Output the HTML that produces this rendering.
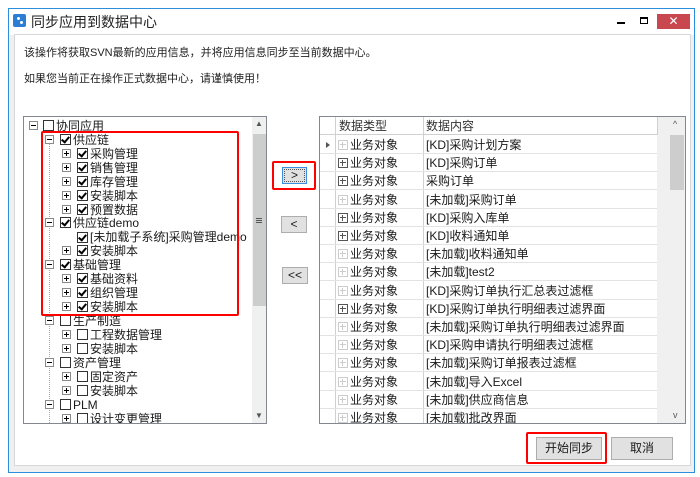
<!DOCTYPE html>
<html><head><meta charset="utf-8"><style>
*{margin:0;padding:0;box-sizing:border-box}
body{width:700px;height:477px;background:#fff;position:relative;overflow:hidden;font-family:"Liberation Sans","Noto Sans CJK SC",sans-serif;font-size:12px;color:#1a1a1a}
.a{position:absolute}
.win{left:8px;top:8px;width:687px;height:465px;border:1px solid #2b8fe0;background:#f0f0f0}
.title{left:9px;top:9px;width:685px;height:26px;background:#fff}
.panel{left:14px;top:34px;width:677px;height:432px;border:1px solid #d8d8d8;background:#fff}
.t{white-space:nowrap;line-height:14px}
.exp{width:9px;height:9px;border:1px solid #8a8a8a;background:#fff}
.exp:before{content:"";position:absolute;left:1px;top:3px;width:5px;height:1px;background:#000}
.exp.p:after{content:"";position:absolute;left:3px;top:1px;width:1px;height:5px;background:#000}
.cb{width:11px;height:11px;border:1px solid #333;background:#fff}
.cb.c:after{content:"";position:absolute;left:2px;top:0px;width:3px;height:6px;border:solid #000;border-width:0 2px 2px 0;transform:rotate(40deg)}
.btn{border:1px solid #adadad;background:#e1e1e1;text-align:center;font-size:12px}
.red{border:2px solid #f00;border-radius:2px}
.row{left:320px;width:337px;height:18px;border-bottom:1px solid #e3e3e3}
.rt{left:350px;line-height:18px}
.rc{left:426px;line-height:18px;white-space:nowrap}
.rb{left:338px;width:10px;height:10px;border:1px solid #555}
.rb:before{content:"";position:absolute;left:1px;top:3px;width:6px;height:1px;background:#555}
.rb:after{content:"";position:absolute;left:3px;top:1px;width:1px;height:6px;background:#555}
.rb.g{border-color:#ccc}.rb.g:before,.rb.g:after{background:#ccc}
</style></head><body>
<div class="a win"></div>
<div class="a title"></div>
<div class="a" style="left:13px;top:14px;width:13px;height:13px;background:#2a7fd4;border-radius:2px"></div>
<div class="a" style="left:17px;top:17px;width:3px;height:3px;background:#fff;border-radius:50%"></div>
<div class="a" style="left:20px;top:21px;width:3px;height:3px;background:#fff;border-radius:50%"></div>
<div class="a t" style="left:31px;top:13px;font-size:14px;line-height:18px;color:#222">同步应用到数据中心</div>
<div class="a" style="left:617px;top:22px;width:8px;height:2px;background:#000"></div>
<div class="a" style="left:640px;top:17px;width:8px;height:7px;border:1px solid #000;border-top-width:2px"></div>
<div class="a" style="left:657px;top:14px;width:33px;height:15px;background:#c9474f;color:#fff;text-align:center;font-size:12px;line-height:15px">✕</div>
<div class="a panel"></div>
<div class="a t" style="left:24px;top:46px;font-size:11px;color:#222">该操作将获取SVN最新的应用信息，并将应用信息同步至当前数据中心。</div>
<div class="a t" style="left:24px;top:72px;font-size:11px;color:#222">如果您当前正在操作正式数据中心，请谨慎使用！</div>

<div class="a" style="left:23px;top:116px;width:244px;height:308px;border:1px solid #828790;background:#fff;overflow:hidden">
<div class="a" style="left:228px;top:0;width:15px;height:306px;background:#f0f0f0"></div>
<div class="a" style="left:229px;top:17px;width:13px;height:172px;background:#cdcdcd"></div>
<div class="a" style="left:231px;top:2px;font-size:8px;color:#555">▲</div>
<div class="a" style="left:231px;top:294px;font-size:8px;color:#555">▼</div>
<div class="a" style="left:232px;top:101px;width:6px;height:5px;border-top:1px solid #555;border-bottom:1px solid #555"></div>
<div class="a" style="left:232px;top:103px;width:6px;height:1px;background:#555"></div>
<div class="a" style="left:25px;top:18px;height:290px;border-left:1px dotted #aaa"></div>
</div>
<div class="a exp" style="left:29px;top:121px"></div><div class="a cb" style="left:43px;top:120px"></div><div class="a t" style="left:56px;top:119px">协同应用</div>

<div class="a exp" style="left:45px;top:135px"></div><div class="a cb c" style="left:60px;top:134px"></div><div class="a t" style="left:73px;top:133px">供应链</div>
<div class="a exp p" style="left:62px;top:149px"></div><div class="a cb c" style="left:77px;top:148px"></div><div class="a t" style="left:90px;top:147px">采购管理</div>
<div class="a exp p" style="left:62px;top:163px"></div><div class="a cb c" style="left:77px;top:162px"></div><div class="a t" style="left:90px;top:161px">销售管理</div>
<div class="a exp p" style="left:62px;top:177px"></div><div class="a cb c" style="left:77px;top:176px"></div><div class="a t" style="left:90px;top:175px">库存管理</div>
<div class="a exp p" style="left:62px;top:191px"></div><div class="a cb c" style="left:77px;top:190px"></div><div class="a t" style="left:90px;top:189px">安装脚本</div>
<div class="a exp p" style="left:62px;top:205px"></div><div class="a cb c" style="left:77px;top:204px"></div><div class="a t" style="left:90px;top:203px">预置数据</div>
<div class="a exp" style="left:45px;top:218px"></div><div class="a cb c" style="left:60px;top:217px"></div><div class="a t" style="left:73px;top:216px">供应链demo</div>
<div class="a cb c" style="left:77px;top:232px"></div><div class="a t" style="left:90px;top:230px">[未加载子系统]采购管理demo</div>
<div class="a exp p" style="left:62px;top:246px"></div><div class="a cb c" style="left:77px;top:245px"></div><div class="a t" style="left:90px;top:244px">安装脚本</div>
<div class="a exp" style="left:45px;top:260px"></div><div class="a cb c" style="left:60px;top:259px"></div><div class="a t" style="left:73px;top:258px">基础管理</div>
<div class="a exp p" style="left:62px;top:274px"></div><div class="a cb c" style="left:77px;top:273px"></div><div class="a t" style="left:90px;top:272px">基础资料</div>
<div class="a exp p" style="left:62px;top:288px"></div><div class="a cb c" style="left:77px;top:287px"></div><div class="a t" style="left:90px;top:286px">组织管理</div>
<div class="a exp p" style="left:62px;top:302px"></div><div class="a cb c" style="left:77px;top:301px"></div><div class="a t" style="left:90px;top:300px">安装脚本</div>
<div class="a exp" style="left:45px;top:316px"></div><div class="a cb" style="left:60px;top:315px"></div><div class="a t" style="left:73px;top:314px">生产制造</div>
<div class="a exp p" style="left:62px;top:330px"></div><div class="a cb" style="left:77px;top:329px"></div><div class="a t" style="left:90px;top:328px">工程数据管理</div>
<div class="a exp p" style="left:62px;top:344px"></div><div class="a cb" style="left:77px;top:343px"></div><div class="a t" style="left:90px;top:342px">安装脚本</div>
<div class="a exp" style="left:45px;top:358px"></div><div class="a cb" style="left:60px;top:357px"></div><div class="a t" style="left:73px;top:356px">资产管理</div>
<div class="a exp p" style="left:62px;top:372px"></div><div class="a cb" style="left:77px;top:371px"></div><div class="a t" style="left:90px;top:370px">固定资产</div>
<div class="a exp p" style="left:62px;top:386px"></div><div class="a cb" style="left:77px;top:385px"></div><div class="a t" style="left:90px;top:384px">安装脚本</div>
<div class="a exp" style="left:45px;top:400px"></div><div class="a cb" style="left:60px;top:399px"></div><div class="a t" style="left:73px;top:398px">PLM</div>
<div class="a" style="left:24px;top:410px;width:228px;height:13px;overflow:hidden"><div class="a exp p" style="left:38px;top:4px"></div><div class="a cb" style="left:53px;top:3px"></div><div class="a t" style="left:66px;top:2px">设计变更管理</div></div>
<div class="a red" style="left:41px;top:131px;width:198px;height:185px"></div>

<div class="a btn" style="left:282px;top:167px;width:25px;height:17px;border-color:#3c8fe0;line-height:15px">&gt;</div>
<div class="a" style="left:284px;top:169px;width:21px;height:13px;border:1px dotted #555"></div>
<div class="a red" style="left:272px;top:161px;width:44px;height:29px"></div>
<div class="a btn" style="left:281px;top:216px;width:26px;height:17px;line-height:15px">&lt;</div>
<div class="a btn" style="left:282px;top:267px;width:26px;height:17px;line-height:15px">&lt;&lt;</div>

<div class="a" style="left:319px;top:116px;width:367px;height:308px;border:1px solid #828790;background:#fff"></div>
<div class="a" style="left:320px;top:117px;width:349px;height:18px;background:#fff;border-bottom:1px solid #d0d0d0"></div>
<div class="a" style="left:657px;top:117px;width:12px;height:18px;background:#f0f0f0;border-left:1px solid #d0d0d0"></div>
<div class="a" style="left:657px;top:135px;width:12px;height:288px;background:#f0f0f0"></div>
<div class="a" style="left:669px;top:117px;width:16px;height:306px;background:#f0f0f0"></div>
<div class="a" style="left:670px;top:135px;width:14px;height:55px;background:#cdcdcd"></div>
<div class="a" style="left:673px;top:119px;font-size:9px;color:#555">^</div>
<div class="a" style="left:673px;top:410px;font-size:9px;color:#555">v</div>
<div class="a" style="left:335px;top:117px;width:1px;height:306px;background:#d0d0d0"></div>
<div class="a" style="left:423px;top:117px;width:1px;height:306px;background:#d0d0d0"></div>
<div class="a t" style="left:339px;top:119px;color:#333">数据类型</div>
<div class="a t" style="left:426px;top:119px;color:#333">数据内容</div>
<div class="a" style="left:326px;top:142px;width:0;height:0;border-left:4px solid #555;border-top:3px solid transparent;border-bottom:3px solid transparent"></div>

<div class="a row" style="top:136px"></div><div class="a rb g" style="top:140px"></div><div class="a rt" style="top:136px">业务对象</div><div class="a rc" style="top:136px">[KD]采购计划方案</div>
<div class="a row" style="top:154px"></div><div class="a rb" style="top:158px"></div><div class="a rt" style="top:154px">业务对象</div><div class="a rc" style="top:154px">[KD]采购订单</div>
<div class="a row" style="top:172px"></div><div class="a rb" style="top:176px"></div><div class="a rt" style="top:172px">业务对象</div><div class="a rc" style="top:172px">采购订单</div>
<div class="a row" style="top:191px"></div><div class="a rb g" style="top:195px"></div><div class="a rt" style="top:191px">业务对象</div><div class="a rc" style="top:191px">[未加载]采购订单</div>
<div class="a row" style="top:209px"></div><div class="a rb" style="top:213px"></div><div class="a rt" style="top:209px">业务对象</div><div class="a rc" style="top:209px">[KD]采购入库单</div>
<div class="a row" style="top:227px"></div><div class="a rb" style="top:231px"></div><div class="a rt" style="top:227px">业务对象</div><div class="a rc" style="top:227px">[KD]收料通知单</div>
<div class="a row" style="top:245px"></div><div class="a rb g" style="top:249px"></div><div class="a rt" style="top:245px">业务对象</div><div class="a rc" style="top:245px">[未加载]收料通知单</div>
<div class="a row" style="top:263px"></div><div class="a rb g" style="top:267px"></div><div class="a rt" style="top:263px">业务对象</div><div class="a rc" style="top:263px">[未加载]test2</div>
<div class="a row" style="top:282px"></div><div class="a rb g" style="top:286px"></div><div class="a rt" style="top:282px">业务对象</div><div class="a rc" style="top:282px">[KD]采购订单执行汇总表过滤框</div>
<div class="a row" style="top:300px"></div><div class="a rb" style="top:304px"></div><div class="a rt" style="top:300px">业务对象</div><div class="a rc" style="top:300px">[KD]采购订单执行明细表过滤界面</div>
<div class="a row" style="top:318px"></div><div class="a rb g" style="top:322px"></div><div class="a rt" style="top:318px">业务对象</div><div class="a rc" style="top:318px">[未加载]采购订单执行明细表过滤界面</div>
<div class="a row" style="top:336px"></div><div class="a rb g" style="top:340px"></div><div class="a rt" style="top:336px">业务对象</div><div class="a rc" style="top:336px">[KD]采购申请执行明细表过滤框</div>
<div class="a row" style="top:354px"></div><div class="a rb g" style="top:358px"></div><div class="a rt" style="top:354px">业务对象</div><div class="a rc" style="top:354px">[未加载]采购订单报表过滤框</div>
<div class="a row" style="top:373px"></div><div class="a rb g" style="top:377px"></div><div class="a rt" style="top:373px">业务对象</div><div class="a rc" style="top:373px">[未加载]导入Excel</div>
<div class="a row" style="top:391px"></div><div class="a rb g" style="top:395px"></div><div class="a rt" style="top:391px">业务对象</div><div class="a rc" style="top:391px">[未加载]供应商信息</div>
<div class="a" style="left:320px;top:409px;width:337px;height:14px;overflow:hidden"><div class="a rb g" style="left:18px;top:4px"></div><div class="a" style="left:30px;top:0;line-height:18px">业务对象</div><div class="a" style="left:106px;top:0;line-height:18px;white-space:nowrap">[未加载]批改界面</div></div>

<div class="a btn" style="left:536px;top:437px;width:66px;height:23px;line-height:21px">开始同步</div>
<div class="a red" style="left:526px;top:432px;width:81px;height:32px"></div>
<div class="a btn" style="left:611px;top:437px;width:62px;height:23px;line-height:21px">取消</div>
</body></html>
